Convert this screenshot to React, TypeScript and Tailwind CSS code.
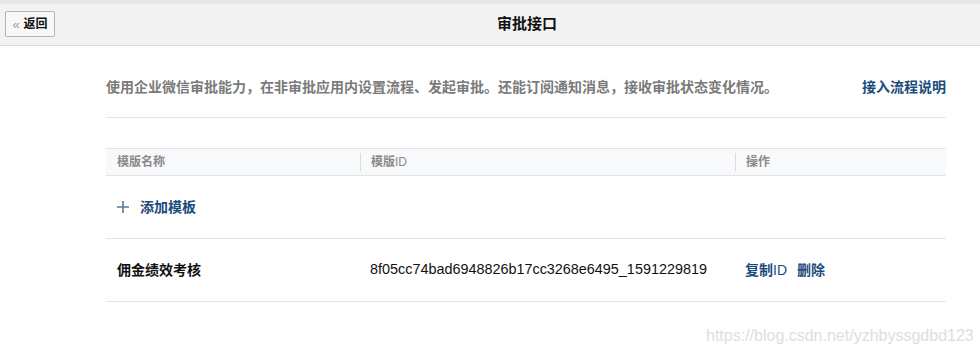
export default function App() {
  return (
    <div
      className="relative min-h-[354px] bg-white text-[14px] text-[#222]"
      style={{ fontFamily: '"Liberation Sans", "Noto Sans CJK SC", sans-serif' }}
    >
      {/* top strip */}
      <div className="h-[4px] bg-[#e6e7e9]" />

      {/* header */}
      <div className="relative flex h-[42px] items-center justify-center border-b border-[#dcdcdc] bg-[#f3f3f3] pl-[74px]">
        <button className="absolute left-[5px] top-[7px] flex h-[26px] w-[50px] items-center justify-center gap-[4px] rounded-[2px] border border-[#b4b4b4] bg-[#f8f8f8] text-[12px] font-bold text-[#111]">
          <span className="text-[13px] font-normal leading-none text-[#999]">«</span>
          返回
        </button>
        <h1 className="text-[15px] font-bold text-[#111]">审批接口</h1>
      </div>

      <div className="ml-[106px] w-[840px]">
        {/* description */}
        <div className="flex items-center justify-between border-b border-[#e4e4e4] pb-[20px] pt-[31px] leading-[20px]">
          <p className="font-bold text-[#7a7a7a]">
            使用企业微信审批能力，在非审批应用内设置流程、发起审批。还能订阅通知消息，接收审批状态变化情况。
          </p>
          <a className="font-bold text-[#1b4c7c]">接入流程说明</a>
        </div>

        {/* table */}
        <div className="mt-[30px]">
          <div className="grid h-[28px] grid-cols-[254px_375px_1fr] items-center border-y border-[#e2e4e8] bg-[#f8f9fb] text-[12px] font-bold text-[#8a8a8a]">
            <div className="pl-[11px]">模版名称</div>
            <div className="border-l border-[#dcdcdc] pl-[10px] leading-[18px]">
              模版<span className="font-normal">ID</span>
            </div>
            <div className="border-l border-[#dcdcdc] pl-[10px] leading-[18px]">操作</div>
          </div>

          <div className="flex h-[63px] items-center border-b border-[#e4e4e4] pl-[11px]">
            <svg width="12" height="12" viewBox="0 0 12 12" className="mr-[11px]">
              <path d="M6 0v12M0 6h12" stroke="#5b7896" strokeWidth="1.6" />
            </svg>
            <span className="font-bold text-[#1b4c7c]">添加模板</span>
          </div>

          <div className="grid h-[63px] grid-cols-[254px_375px_1fr] items-center border-b border-[#e4e4e4]">
            <div className="pl-[11px] font-bold text-[#111]">佣金绩效考核</div>
            <div className="pl-[10px] text-[14.4px] text-[#111]">8f05cc74bad6948826b17cc3268e6495_1591229819</div>
            <div className="flex gap-[10px] pl-[10px] font-bold text-[#1b4c7c]">
              <a>
                复制<span className="font-normal">ID</span>
              </a>
              <a>删除</a>
            </div>
          </div>
        </div>
      </div>

      {/* watermark */}
      <div className="absolute left-[706px] top-[324px] text-[16px] text-[#dedede]">
        https://blog.csdn.net/yzhbyssgdbd123
      </div>
    </div>
  );
}
